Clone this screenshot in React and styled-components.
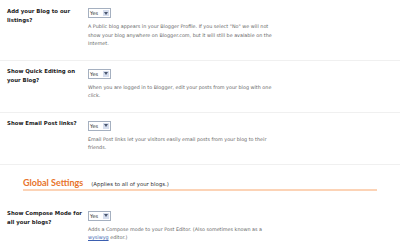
import React from 'react'
import styled, { createGlobalStyle } from 'styled-components'

const Global = createGlobalStyle`
  html, body {
    margin: 0;
    padding: 0;
    background: #fff;
  }
  body {
    font-family: "DejaVu Sans", Verdana, sans-serif;
    color: #333;
  }
`

const Page = styled.div`
  width: 400px;
  height: 246px;
  overflow: hidden;
`

const Row = styled.div`
  display: grid;
  grid-template-columns: 80px 1fr;
  padding: ${p => p.$top || 6.5}px 5px 12px 7px;
  border-bottom: ${p => (p.$last ? 'none' : '1px solid #f0f0f0')};
`

const Label = styled.div`
  font-weight: bold;
  font-size: 5.4px;
  line-height: 9px;
  color: #222;
`

const Field = styled.div`
  display: flex;
  flex-direction: column;
  align-items: flex-start;
  padding-left: 1px;
`

const Select = styled.div`
  display: flex;
  margin-top: 1.5px;
  height: 8px;
  border: 1px solid #a5b0c0;
  background: #fff;
  box-sizing: content-box;
`

const SelectValue = styled.span`
  font-size: 5px;
  line-height: 8px;
  padding: 0 2px 0 1px;
  width: 10px;
  color: #222;
`

const SelectArrow = styled.span`
  width: 6px;
  height: 6px;
  margin: 1px;
  background: #d6deee;
  display: flex;
  align-items: center;
  justify-content: center;
`

const Desc = styled.p`
  margin: 4px 0 0;
  font-size: 4.85px;
  line-height: 8.5px;
  color: #666;
  white-space: nowrap;
`

const Link = styled.a`
  color: #3b5fb0;
  text-decoration: underline;
`

const Heading = styled.div`
  display: flex;
  align-items: baseline;
  gap: 8px;
  margin: 12px 0 0 23px;
  width: 354px;
  height: 12px;
  border-bottom: 2px solid #fcd3b6;
`

const HeadingTitle = styled.span`
  font-family: Lato, "Open Sans", sans-serif;
  font-weight: bold;
  font-size: 9px;
  line-height: 12px;
  color: #e8742a;
`

const HeadingNote = styled.span`
  font-size: 5.4px;
  color: #333;
`

const settings = [
  {
    label: ['Add your Blog to our', 'listings?'],
    desc: [
      'A Public blog appears in your Blogger Profile. If you select "No" we will not',
      'show your blog anywhere on Blogger.com, but it will still be avalable on the',
      'Internet.',
    ],
  },
  {
    label: ['Show Quick Editing on', 'your Blog?'],
    desc: [
      'When you are logged in to Blogger, edit your posts from your blog with one',
      'click.',
    ],
  },
  {
    label: ['Show Email Post links?'],
    desc: [
      'Email Post links let your visitors easily email posts from your blog to their',
      'friends.',
    ],
  },
]

const YesSelect = () => (
  <Select>
    <SelectValue>Yes</SelectValue>
    <SelectArrow>
      <svg width="4" height="3" viewBox="0 0 4 3">
        <path d="M0 0 L4 0 L2 3 Z" fill="#4d5870" />
      </svg>
    </SelectArrow>
  </Select>
)

const Lines = ({ lines }) =>
  lines.map((line, i) => (
    <React.Fragment key={i}>
      {line}
      {i < lines.length - 1 && <br />}
    </React.Fragment>
  ))

export default function App() {
  return (
    <Page>
      <Global />
      {settings.map((s, i) => (
        <Row key={i}>
          <Label><Lines lines={s.label} /></Label>
          <Field>
            <YesSelect />
            <Desc><Lines lines={s.desc} /></Desc>
          </Field>
        </Row>
      ))}
      <Heading>
        <HeadingTitle>Global Settings</HeadingTitle>
        <HeadingNote>(Applies to all of your blogs.)</HeadingNote>
      </Heading>
      <Row $top={18.5} $last>
        <Label><Lines lines={['Show Compose Mode for', 'all your blogs?']} /></Label>
        <Field>
          <YesSelect />
          <Desc>
            Adds a Compose mode to your Post Editor. (Also sometimes known as a
            <br />
            <Link href="#">wysiwyg</Link> editor.)
          </Desc>
        </Field>
      </Row>
    </Page>
  )
}
